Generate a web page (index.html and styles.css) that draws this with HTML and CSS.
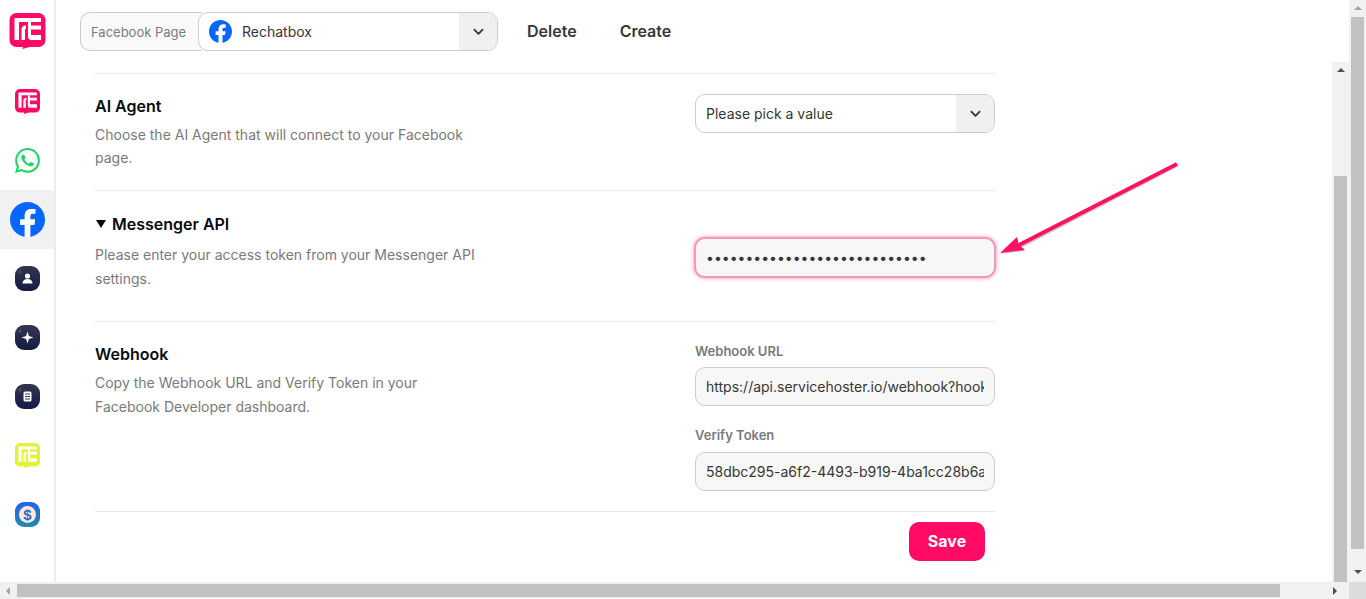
FILE: index.html
```html
<!DOCTYPE html>
<html lang="en">
<head>
<meta charset="utf-8">
<title>Facebook Page</title>
<link rel="stylesheet" href="styles.css">
</head>
<body>
<svg class="defs" width="0" height="0" aria-hidden="true">
  <symbol id="re" viewBox="0 0 36 36">
    <path fill="currentColor" d="M7 0h22a7 7 0 0 1 7 7v20a7 7 0 0 1-7 7H20l-7 2 .5-2H7a7 7 0 0 1-7-7V7a7 7 0 0 1 7-7z"/>
    <g fill="#fff">
      <path d="M5 5h26.500v4H9.500v18H5z"/>
      <path d="M12 27V17c0-2.800 1.500-4.500 4-4.500h.5V16c-.7 0-1 .4-1 1.200V27z"/>
      <path d="M18.500 9h3v3.500h10v4h-10v5.500h10v5H21.500c-2 0-3-1.300-3-3.500z"/>
    </g>
  </symbol>
  <symbol id="fb" viewBox="0 0 24 24">
    <path fill="#0866ff" d="M24 12.073c0-6.627-5.373-12-12-12s-12 5.373-12 12c0 5.990 4.388 10.954 10.125 11.854v-8.385H7.078v-3.470h3.047V9.430c0-3.007 1.792-4.669 4.533-4.669 1.312 0 2.686.235 2.686.235v2.953H15.830c-1.491 0-1.956.925-1.956 1.874v2.250h3.328l-.532 3.470h-2.796v8.385C19.612 23.027 24 18.062 24 12.073z"/>
    <path fill="#fff" d="M16.670 15.542l.532-3.470h-3.328V9.820c0-.949.465-1.874 1.956-1.874h1.513V4.996s-1.374-.235-2.686-.235c-2.741 0-4.533 1.662-4.533 4.669v2.642H7.078v3.470h3.047v8.385a12 12 0 0 0 3.750 0v-8.385z"/>
  </symbol>
  <symbol id="chev" viewBox="0 0 12 8">
    <path d="M1.500 1.500 6 6l4.500-4.500" fill="none" stroke="#363636" stroke-width="2" stroke-linecap="round" stroke-linejoin="round"/>
  </symbol>
  <linearGradient id="navy" x1="0" y1="0" x2="0" y2="1">
    <stop offset="0" stop-color="#34364f"/><stop offset="1" stop-color="#151a45"/>
  </linearGradient>
  <linearGradient id="blue" x1="0" y1="0" x2="0" y2="1">
    <stop offset="0" stop-color="#2561f0"/><stop offset="1" stop-color="#2388b0"/>
  </linearGradient>
</svg>

<div class="window">
  <div class="app">
    <nav class="sidebar">
      <div class="brand"><svg class="brand-logo"><use href="#re"/></svg></div>
      <ul class="nav-list">
        <li class="nav-item"><svg class="nav-icon re-pink"><use href="#re"/></svg></li>
        <li class="nav-item">
          <svg class="nav-icon" viewBox="0 0 24 24"><path fill="#25d366" d="M17.472 14.382c-.297-.149-1.758-.867-2.030-.967-.273-.099-.471-.148-.670.150-.197.297-.767.966-.940 1.164-.173.199-.347.223-.644.075-.297-.150-1.255-.463-2.390-1.475-.883-.788-1.480-1.761-1.653-2.059-.173-.297-.018-.458.130-.606.134-.133.298-.347.446-.520.149-.174.198-.298.298-.497.099-.198.050-.371-.025-.520-.075-.149-.669-1.612-.916-2.207-.242-.579-.487-.500-.669-.510-.173-.008-.371-.010-.570-.010-.198 0-.520.074-.792.372-.272.297-1.040 1.016-1.040 2.479 0 1.462 1.065 2.875 1.213 3.074.149.198 2.096 3.200 5.077 4.487.709.306 1.262.489 1.694.625.712.227 1.360.195 1.871.118.571-.085 1.758-.719 2.006-1.413.248-.694.248-1.289.173-1.413-.074-.124-.272-.198-.570-.347m-5.421 7.403h-.004a9.870 9.870 0 0 1-5.031-1.378l-.361-.214-3.741.982.998-3.648-.235-.374a9.860 9.860 0 0 1-1.510-5.260c.001-5.450 4.436-9.884 9.888-9.884 2.640 0 5.122 1.030 6.988 2.898a9.825 9.825 0 0 1 2.893 6.994c-.003 5.450-4.437 9.884-9.885 9.884m8.413-18.297A11.815 11.815 0 0 0 12.050 0C5.495 0 .160 5.335.157 11.892c0 2.096.547 4.142 1.588 5.945L.057 24l6.305-1.654a11.882 11.882 0 0 0 5.683 1.448h.005c6.554 0 11.890-5.335 11.893-11.893a11.821 11.821 0 0 0-3.480-8.413z"/></svg>
        </li>
        <li class="nav-item is-active"><svg class="nav-icon-large"><use href="#fb"/></svg></li>
        <li class="nav-item">
          <svg class="nav-icon" viewBox="0 0 25 25"><rect width="25" height="25" rx="9" fill="url(#navy)"/><path d="M5 3.500l.7 1.800 1.800.7-1.800.7L5 8.500l-.7-1.800L2.500 6l1.800-.7z" fill="#fff" opacity=".16"/><circle cx="12.500" cy="10" r="2.600" fill="#fff"/><path d="M7.500 17.500c0-3 2-4.500 5-4.500s5 1.500 5 4.500z" fill="#fff"/></svg>
        </li>
        <li class="nav-item">
          <svg class="nav-icon" viewBox="0 0 25 25"><rect width="25" height="25" rx="9" fill="url(#navy)"/><path d="M5 3.500l.7 1.800 1.800.7-1.800.7L5 8.500l-.7-1.800L2.500 6l1.800-.7z" fill="#fff" opacity=".16"/><path d="M12.500 6.500l1.400 4.600 4.600 1.400-4.600 1.400-1.400 4.600-1.400-4.600-4.600-1.400 4.600-1.400z" fill="#fff"/></svg>
        </li>
        <li class="nav-item">
          <svg class="nav-icon" viewBox="0 0 25 25"><rect width="25" height="25" rx="9" fill="url(#navy)"/><path d="M5 3.500l.7 1.800 1.800.7-1.800.7L5 8.500l-.7-1.800L2.500 6l1.800-.7z" fill="#fff" opacity=".16"/><rect x="8.500" y="7.500" width="8" height="10" rx="1.500" fill="#fff"/><path d="M10 10h5M10 12.500h5M10 15h5" stroke="#232545" stroke-width=".9"/></svg>
        </li>
        <li class="nav-item"><svg class="nav-icon re-lime"><use href="#re"/></svg></li>
        <li class="nav-item">
          <svg class="nav-icon" viewBox="0 0 25 25"><rect width="25" height="25" rx="9" fill="url(#blue)"/><circle cx="12.500" cy="12.500" r="8.500" fill="#ffecd0"/><text x="12.500" y="17.800" class="dollar" text-anchor="middle">$</text></svg>
        </li>
      </ul>
    </nav>

    <main class="main">
      <header class="topbar">
        <div class="page-field">
          <span class="page-label">Facebook Page</span>
          <div class="page-select">
            <svg class="page-fb"><use href="#fb"/></svg>
            <span class="page-name">Rechatbox</span>
            <span class="chev-cell"><svg class="chev"><use href="#chev"/></svg></span>
          </div>
        </div>
        <a class="top-action">Delete</a>
        <a class="top-action">Create</a>
      </header>

      <div class="panel">
        <div class="content">
          <div class="form">
            <section class="row row-agent">
              <div class="row-text">
                <h2 class="row-title">AI Agent</h2>
                <p class="row-desc">Choose the AI Agent that will connect to your Facebook page.</p>
              </div>
              <div class="row-control">
                <div class="select-box">
                  <span class="select-value">Please pick a value</span>
                  <span class="chev-cell"><svg class="chev"><use href="#chev"/></svg></span>
                </div>
              </div>
            </section>

            <section class="row row-api">
              <div class="row-text">
                <h2 class="row-title row-title-toggle"><svg class="caret" viewBox="0 0 10 8"><path d="M0 0h10L5 8z"/></svg>Messenger API</h2>
                <p class="row-desc">Please enter your access token from your Messenger API settings.</p>
              </div>
              <div class="row-control control-api">
                <input class="text-input is-focused" type="password" value="abcdefghijklmnopqrstuvwxyz12" readonly>
              </div>
            </section>

            <section class="row row-hook">
              <div class="row-text">
                <h2 class="row-title">Webhook</h2>
                <p class="row-desc">Copy the Webhook URL and Verify Token in your Facebook Developer dashboard.</p>
              </div>
              <div class="row-control">
                <label class="field-label">Webhook URL</label>
                <input class="text-input" type="text" value="https://api.servicehoster.io/webhook?hook=58dbc295" readonly>
                <label class="field-label field-label-next">Verify Token</label>
                <input class="text-input" type="text" value="58dbc295-a6f2-4493-b919-4ba1cc28b6a1" readonly>
              </div>
            </section>

            <footer class="form-footer"><button class="save-btn" type="button">Save</button></footer>
          </div>
        </div>

        <div class="vbar vbar-inner">
          <span class="arrow arrow-up dark"></span>
          <span class="vthumb vthumb-inner"></span>
        </div>
      </div>
    </main>
  </div>

  <div class="vbar vbar-outer">
    <span class="arrow arrow-up light"></span>
    <span class="vthumb vthumb-outer"></span>
    <span class="arrow arrow-down dark"></span>
  </div>

  <div class="hbar">
    <span class="arrow arrow-left light"></span>
    <span class="hthumb"></span>
    <span class="arrow arrow-right dark"></span>
  </div>
  <div class="corner"></div>
</div>

<svg class="annotation" viewBox="0 0 200 110" aria-hidden="true">
  <path class="annotation-shadow" d="M178 3 20 85"/>
  <path class="annotation-shadow-fill" d="M1 92 20 85 26 89z"/>
  <path class="annotation-line" d="M178 2 20 83"/>
  <path class="annotation-head" d="M1 91 18 75 20 83 26 88z"/>
</svg>
</body>
</html>
```

FILE: styles.css
```css
* { box-sizing: border-box; }

html, body {
  margin: 0;
  height: 100%;
  overflow: hidden;
  background: #fff;
}

body {
  font-family: Inter, "Liberation Sans", sans-serif;
  font-size: 14px;
  color: #363636;
  position: relative;
}

.defs { position: absolute; }

.window {
  display: grid;
  grid-template-columns: 1fr 17px;
  grid-template-rows: 582px 17px;
  width: 1366px;
  height: 599px;
}

.app { display: flex; min-width: 0; min-height: 0; }

/* Sidebar */
.sidebar {
  width: 56px;
  flex: none;
  border-right: 2px solid #ececec;
}

.brand {
  height: 62px;
  margin-right: -1px;
  padding: 13px 0 0 9px;
}

.brand-logo { width: 37px; height: 36px; color: #ff0a64; display: block; }

.nav-list {
  list-style: none;
  margin: 9.5px 0 0;
  padding: 0;
}

.nav-item {
  height: 59.1px;
  display: flex;
  align-items: center;
  justify-content: center;
}

.nav-item.is-active { background: #f1f1f1; }

.nav-icon { width: 25px; height: 25px; display: block; }
.nav-icon-large { width: 35px; height: 35px; display: block; }
.re-pink { color: #ff0a64; }
.re-lime { color: #e4f13c; }
.dollar { font: 700 15px "Liberation Sans", sans-serif; fill: #2468d8; }

/* Main */
.main {
  flex: 1;
  min-width: 0;
  display: flex;
  flex-direction: column;
}

.topbar {
  height: 62px;
  flex: none;
  display: flex;
  align-items: flex-start;
  padding: 12px 0 0 24px;
}

.page-field {
  display: flex;
  width: 418px;
  height: 39px;
  margin-right: 29px;
}

.page-label {
  width: 122px;
  flex: none;
  margin-right: -4px;
  padding-left: 10px;
  border: 1px solid #ccc;
  border-right: 0;
  border-radius: 10px 0 0 10px;
  background: #fafafa;
  color: #7a7a7a;
  font-size: 13px;
  line-height: 38px;
}

.page-select {
  flex: 1;
  display: flex;
  align-items: center;
  border: 1px solid #ccc;
  border-radius: 10px;
  background: #fff;
  overflow: hidden;
  padding-left: 10px;
}

.page-fb { width: 23px; height: 23px; flex: none; margin-right: 10px; }
.page-name { flex: 1; font-size: 14px; }

.chev-cell {
  width: 38px;
  height: 100%;
  flex: none;
  background: #f0f0f0;
  display: flex;
  align-items: center;
  justify-content: center;
}

.chev { width: 11px; height: 8px; display: block; }

.top-action {
  font-size: 16px;
  font-weight: 600;
  line-height: 39px;
  color: #363636;
  margin-right: 43px;
}

.panel { flex: 1; min-height: 0; display: flex; }

.content {
  flex: 1;
  min-width: 0;
  padding: 11px 0 0 39px;
  overflow: hidden;
}

.form { width: 900px; border-top: 1px solid #e8e8e8; }

.row {
  display: flex;
  justify-content: space-between;
  padding: 20px 0;
  border-bottom: 1px solid #e8e8e8;
}

.row-agent { padding-bottom: 21px; }
.row-api { padding: 21px 0 30px; }

.row-text { width: 385px; }

.row-title {
  margin: 0;
  font-size: 16px;
  font-weight: 600;
  line-height: 24px;
  color: #0a0a0a;
}

.row-title-toggle { display: flex; align-items: center; }

.caret { width: 10px; height: 8px; margin: 0 6px 0 1px; fill: #0a0a0a; }

.row-desc {
  margin: 5px 0 0;
  font-size: 14px;
  line-height: 24px;
  color: #7a7a7a;
}

.row-agent .row-desc { line-height: 23px; }
.row-api .row-desc { margin-top: 7px; }

.row-control { width: 300px; flex: none; }

.control-api { padding-top: 26px; }

.select-box {
  display: flex;
  align-items: center;
  height: 39px;
  border: 1px solid #ccc;
  border-radius: 10px;
  overflow: hidden;
}

.select-value { flex: 1; padding-left: 10px; }

.text-input {
  display: block;
  width: 100%;
  height: 39px;
  padding: 0 10px;
  border: 1px solid #ccc;
  border-radius: 10px;
  background: #f7f7f7;
  color: #363636;
  font-family: inherit;
  font-size: 14px;
  outline: 0;
}

.text-input.is-focused {
  border-color: #e8a0bc;
  box-shadow: 0 0 0 1px #ff8fbb, 0 0 4px 1px #ff8fbb;
}

.field-label {
  display: block;
  margin-bottom: 7px;
  font-size: 13px;
  font-weight: 600;
  line-height: 18px;
  color: #7a7a7a;
}

.field-label-next { margin-top: 20px; margin-bottom: 8px; }

.form-footer {
  display: flex;
  justify-content: flex-end;
  padding: 10px 10px 0 0;
}

.save-btn {
  width: 76px;
  height: 39px;
  padding: 0 0 2px;
  border: 0;
  border-radius: 10px;
  background: #ff0a64;
  color: #fff;
  font-family: inherit;
  font-size: 16px;
  font-weight: 700;
}

/* Scrollbars */
.vbar {
  width: 17px;
  flex: none;
  background: #f1f1f1;
  display: flex;
  flex-direction: column;
  align-items: center;
}

.vbar-outer { grid-column: 2; grid-row: 1; }

.vthumb { display: block; width: 13px; background: #c1c1c1; flex: none; }
.vthumb-inner { height: 406px; margin-top: 99px; }
.vthumb-outer { height: 532px; margin-top: 2px; }

.hbar {
  grid-column: 1;
  grid-row: 2;
  display: flex;
  align-items: center;
  background: #f1f1f1;
  position: relative;
}

.hthumb { display: block; width: 1263px; height: 13px; background: #c1c1c1; }

.corner { background: #dcdcdc; }

.arrow { width: 0; height: 0; flex: none; display: block; border-style: solid; border-color: transparent; }

.arrow-up { margin-top: 6px; border-width: 0 4px 4px; border-bottom-color: var(--arrow); margin-bottom: 5px; }
.arrow-down { margin-top: 21px; border-width: 4px 4px 0; border-top-color: var(--arrow); }
.arrow-left { margin: 0 7px 0 6px; border-width: 4px 4px 4px 0; border-right-color: var(--arrow); }
.arrow-right { margin-left: 53px; border-width: 4px 0 4px 4px; border-left-color: var(--arrow); }

.dark { --arrow: #505050; }
.light { --arrow: #a3a3a3; }

/* Annotation arrow laid over the page */
.annotation {
  position: absolute;
  left: 999px;
  top: 162px;
  width: 200px;
  height: 110px;
  pointer-events: none;
}

.annotation-line { stroke: #ff1164; stroke-width: 4; fill: none; }
.annotation-shadow { stroke: rgba(90, 90, 90, .3); stroke-width: 4; fill: none; }
.annotation-shadow-fill { fill: rgba(90, 90, 90, .35); }
.annotation-head { fill: #ff1164; }
```
